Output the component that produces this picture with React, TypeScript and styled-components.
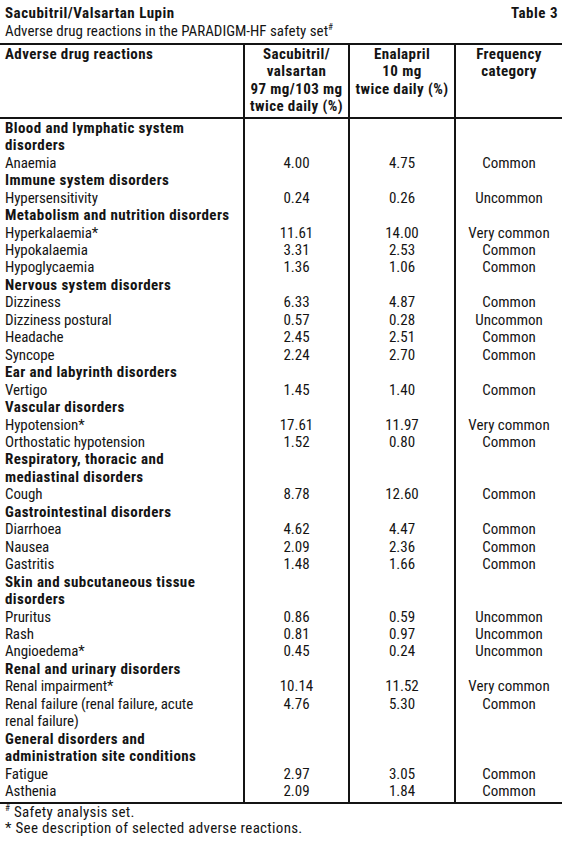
import React from "react"
import styled, { createGlobalStyle } from "styled-components"

const GlobalStyle = createGlobalStyle`
  body {
    margin: 0;
    background: #fff;
    color: #141414;
    font-family: "Roboto Condensed", "Liberation Sans", sans-serif;
  }
`

const Page = styled.div`
  width: 562px;
  padding-top: 4px;
`

const TitleBar = styled.div`
  display: flex;
  justify-content: space-between;
  padding: 0 4px 0 5px;
  font-size: 15px;
  line-height: 18px;
  font-weight: 700;
  letter-spacing: 0.5px;
`

const Subtitle = styled.div`
  padding: 0 5px 3px;
  font-size: 15px;
  line-height: 18px;
`

const Sup = styled.sup`
  font-size: 9px;
  line-height: 0;
  vertical-align: 6px;
`

const Table = styled.table`
  width: 562px;
  border-collapse: collapse;
  border-top: 2px solid #141414;
  border-bottom: 2px solid #141414;
  font-size: 15px;
  line-height: 17.45px;
  table-layout: fixed;
`

const Head = styled.thead`
  border-bottom: 2px solid #141414;
`

const Th = styled.th<{ $left?: boolean }>`
  padding: 1px 5px 1px;
  text-align: ${(p) => (p.$left ? "left" : "center")};
  vertical-align: top;
  font-weight: 700;
  letter-spacing: 0.4px;
  white-space: nowrap;
  & + & {
    border-left: 2px solid #141414;
  }
`

const Td = styled.td<{ $bold?: boolean }>`
  padding: 0 5px;
  vertical-align: top;
  text-align: center;
  white-space: nowrap;
  &:first-child {
    text-align: left;
    font-weight: ${(p) => (p.$bold ? 700 : 400)};
    letter-spacing: ${(p) => (p.$bold ? "0.4px" : "-0.1px")};
  }
  & + & {
    border-left: 2px solid #141414;
  }
`

const FirstRow = styled.tr`
  td {
    padding-top: 1px;
  }
`

const LastRow = styled.tr`
  td {
    padding-bottom: 2px;
  }
`

const Notes = styled.div`
  padding: 1px 5px 0;
  font-size: 15px;
  line-height: 15px;
  letter-spacing: 0.3px;
`

const Note = styled.div`
  height: 15.5px;
`

type Entry = { name: string; a?: string; b?: string; f?: string; group?: boolean }

const rows: Entry[] = [
  { name: "Blood and lymphatic system\ndisorders", group: true },
  { name: "Anaemia", a: "4.00", b: "4.75", f: "Common" },
  { name: "Immune system disorders", group: true },
  { name: "Hypersensitivity", a: "0.24", b: "0.26", f: "Uncommon" },
  { name: "Metabolism and nutrition disorders", group: true },
  { name: "Hyperkalaemia*", a: "11.61", b: "14.00", f: "Very common" },
  { name: "Hypokalaemia", a: "3.31", b: "2.53", f: "Common" },
  { name: "Hypoglycaemia", a: "1.36", b: "1.06", f: "Common" },
  { name: "Nervous system disorders", group: true },
  { name: "Dizziness", a: "6.33", b: "4.87", f: "Common" },
  { name: "Dizziness postural", a: "0.57", b: "0.28", f: "Uncommon" },
  { name: "Headache", a: "2.45", b: "2.51", f: "Common" },
  { name: "Syncope", a: "2.24", b: "2.70", f: "Common" },
  { name: "Ear and labyrinth disorders", group: true },
  { name: "Vertigo", a: "1.45", b: "1.40", f: "Common" },
  { name: "Vascular disorders", group: true },
  { name: "Hypotension*", a: "17.61", b: "11.97", f: "Very common" },
  { name: "Orthostatic hypotension", a: "1.52", b: "0.80", f: "Common" },
  { name: "Respiratory, thoracic and\nmediastinal disorders", group: true },
  { name: "Cough", a: "8.78", b: "12.60", f: "Common" },
  { name: "Gastrointestinal disorders", group: true },
  { name: "Diarrhoea", a: "4.62", b: "4.47", f: "Common" },
  { name: "Nausea", a: "2.09", b: "2.36", f: "Common" },
  { name: "Gastritis", a: "1.48", b: "1.66", f: "Common" },
  { name: "Skin and subcutaneous tissue\ndisorders", group: true },
  { name: "Pruritus", a: "0.86", b: "0.59", f: "Uncommon" },
  { name: "Rash", a: "0.81", b: "0.97", f: "Uncommon" },
  { name: "Angioedema*", a: "0.45", b: "0.24", f: "Uncommon" },
  { name: "Renal and urinary disorders", group: true },
  { name: "Renal impairment*", a: "10.14", b: "11.52", f: "Very common" },
  { name: "Renal failure (renal failure, acute\nrenal failure)", a: "4.76", b: "5.30", f: "Common" },
  { name: "General disorders and\nadministration site conditions", group: true },
  { name: "Fatigue", a: "2.97", b: "3.05", f: "Common" },
  { name: "Asthenia", a: "2.09", b: "1.84", f: "Common" },
]

function Lines({ text }: { text: string }) {
  const parts = text.split("\n")
  return (
    <>
      {parts.map((p, i) => (
        <React.Fragment key={i}>
          {i > 0 && <br />}
          {p}
        </React.Fragment>
      ))}
    </>
  )
}

export default function App() {
  return (
    <Page>
      <GlobalStyle />
      <TitleBar>
        <span>Sacubitril/Valsartan Lupin</span>
        <span>Table 3</span>
      </TitleBar>
      <Subtitle>
        Adverse drug reactions in the PARADIGM-HF safety set<Sup>#</Sup>
      </Subtitle>
      <Table>
        <colgroup>
          <col style={{ width: 244 }} />
          <col style={{ width: 105 }} />
          <col style={{ width: 106 }} />
          <col />
        </colgroup>
        <Head>
          <tr>
            <Th $left>Adverse drug reactions</Th>
            <Th>
              Sacubitril/
              <br />
              valsartan
              <br />
              97 mg/103 mg
              <br />
              twice daily (%)
            </Th>
            <Th>
              Enalapril
              <br />
              10 mg
              <br />
              twice daily (%)
            </Th>
            <Th>
              Frequency
              <br />
              category
            </Th>
          </tr>
        </Head>
        <tbody>
          {rows.map((r, i) => {
            const Row = i === 0 ? FirstRow : i === rows.length - 1 ? LastRow : "tr"
            return (
              <Row key={r.name}>
                <Td $bold={r.group}>
                  <Lines text={r.name} />
                </Td>
                <Td>{r.a}</Td>
                <Td>{r.b}</Td>
                <Td>{r.f}</Td>
              </Row>
            )
          })}
        </tbody>
      </Table>
      <Notes>
        <Note>
          <Sup>#</Sup> Safety analysis set.
        </Note>
        <Note>* See description of selected adverse reactions.</Note>
      </Notes>
    </Page>
  )
}
